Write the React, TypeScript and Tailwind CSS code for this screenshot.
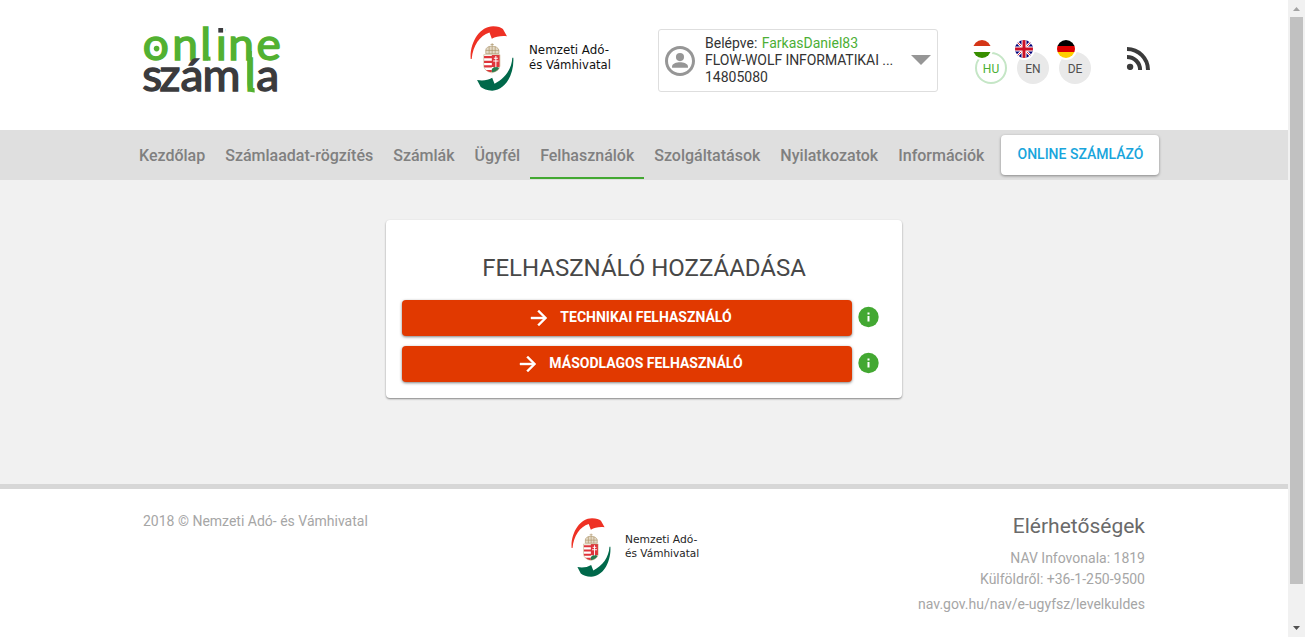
import { type ReactNode } from "react";

function OnlineLogo() {
  return (
    <svg width="144" height="82" viewBox="0 -10 144 82" overflow="visible" className="ml-[141px] mt-[15px] block shrink-0" fontFamily="Lato, sans-serif" fontWeight="400" strokeWidth="1.4">
      <text transform="scale(1.06 1)" y="34.7" fontSize="43.5" fill="#52b131" stroke="#52b131" x="1.7 29.5 56 70.6 82.4 109">online</text>
      <rect x="74" y="-2" width="10" height="11" fill="#fff" />
      <rect x="77.3" y="3" width="4.8" height="4.6" fill="#3b3b3d" />
      <circle cx="15.6" cy="23.6" r="2.8" fill="#52b131" />
      <path d="M64.5 30Q64.5 34 69.5 33.6" fill="none" stroke="#52b131" strokeWidth="4" />
      <text transform="scale(1.06 1)" y="66.3" fontSize="43.5" fill="#3b3b3d" stroke="#3b3b3d" x="1.3 17.5 37.3 58 98 108.7">
        szám<tspan fill="#52b131" stroke="#52b131">l</tspan>a
      </text>
      <path d="M108.6 26V59Q108.6 65.5 113.6 65.2" fill="none" stroke="#52b131" strokeWidth="4.4" />
    </svg>
  );
}

function Emblem({ className, width, height, id }: { className: string; width: number; height: number; id: string }) {
  return (
    <svg width={width} height={height} viewBox="29 32 131 197" preserveAspectRatio="none" className={className}>
      <defs>
        <clipPath id={id}><path d="M70 119H118V153Q117 168 94 174Q71 168 70 153Z" /></clipPath>
      </defs>
      <path fill="#ee3124" d="M31 132C28 82 58 33 98 33C112 33 122 37 127 41L139 63C121 61 106 64 94 71L87 52C58 61 38 92 34 132Z" />
      <path fill="#00684a" d="M158 128C161 178 134 228 95 228C80 228 68 222 61 217L50 196C67 199 82 197 95 189L102 207C132 192 153 164 155 128Z" />
      <g clipPath={`url(#${id})`}>
        <path fill="#fff" d="M70 119H118V174H70Z" />
        <path fill="#df343b" d="M70 123H94V130H70ZM70 137H94V144H70ZM70 151H94V158H70ZM70 165H94V172H70ZM94 119H118V156H94Z" />
        <path fill="#287b50" d="M94 162Q105 150 118 160V174H94Z" />
        <path stroke="#fff" strokeWidth="3" d="M106 123V157M100 130H112M98 138H114" />
      </g>
      <path d="M70 119H118V153Q117 168 94 174Q71 168 70 153Z" fill="none" stroke="#b99a6a" strokeWidth="1.5" />
      <path d="M76 116V105Q77 94 94 93Q112 94 115 105V116ZM76 106H115M86 94V116M95 84V116M104 94V116M90 88H100" fill="#e4dac8" stroke="#ab9266" strokeWidth="2" />
    </svg>
  );
}

function Wordmark({ className, width, height, small }: { className: string; width: number; height: number; small?: boolean }) {
  return (
    <svg width={width} height={height} viewBox="0 0 84 34" preserveAspectRatio="none" className={className} fontFamily="'DejaVu Sans', sans-serif" fontSize="11.8" fill={small ? "#252525" : "#111"}>
      <text x="0" y="12" textLength="80" lengthAdjust="spacingAndGlyphs">Nemzeti Adó-</text>
      <text x="0" y="27" textLength="82" lengthAdjust="spacingAndGlyphs">és Vámhivatal</text>
    </svg>
  );
}

function Flag({ code }: { code: string }) {
  return (
    <svg width="22" height="22" viewBox="0 0 22 22" className="absolute -left-[4px] -top-[14px]">
      <defs><clipPath id={`flag-${code}`}><circle cx="11" cy="11" r="9" /></clipPath></defs>
      <circle cx="11" cy="11" r="11" fill="#fff" />
      <g clipPath={`url(#flag-${code})`}>
        {code === "HU" && <><path fill="#d43516" d="M0 0H22V8H0Z" /><path fill="#388e00" d="M0 14H22V22H0Z" /></>}
        {code === "DE" && <><path fill="#000" d="M0 0H22V8H0Z" /><path fill="#dd0000" d="M0 8H22V14H0Z" /><path fill="#ffce00" d="M0 14H22V22H0Z" /></>}
        {code === "EN" && <>
          <path fill="#00007a" d="M0 0H22V22H0Z" />
          <path stroke="#fff" strokeWidth="2.6" d="M0 0L22 22M22 0L0 22" />
          <path stroke="#cc1026" strokeWidth="0.9" d="M0 0L22 22M22 0L0 22" />
          <path stroke="#fff" strokeWidth="5" d="M11 0V22M0 11H22" />
          <path stroke="#cc1026" strokeWidth="3" d="M11 0V22M0 11H22" />
        </>}
      </g>
    </svg>
  );
}

function Language({ code, active }: { code: string; active?: boolean }) {
  return (
    <button className={`relative flex size-8 items-center justify-center rounded-full text-[12px] ${active ? "text-[#4caf35] shadow-[inset_0_0_0_2px_#c5e6c6]" : "bg-[#e9e9e9] text-[#505050]"}`}>
      <span className="translate-y-px">{code}</span>
      <Flag code={code} />
    </button>
  );
}

function NavItem({ children, active }: { children: ReactNode; active?: boolean }) {
  return (
    <a className={`flex h-[49px] items-center whitespace-nowrap border-b-2 px-[10px] pt-[5px] text-[16px] font-medium ${active ? "border-[#43a832] text-[#808080]" : "border-transparent text-[#808080]"}`}>{children}</a>
  );
}

function ActionRow({ children }: { children: ReactNode }) {
  return (
    <div className="flex items-center gap-[6px]">
      <button className="flex h-9 w-[450px] items-center justify-center rounded-[4px] bg-[#e13900] text-[14px] font-bold text-white shadow-[0_1px_3px_rgba(0,0,0,0.5)]">
        <svg width="24" height="24" viewBox="0 0 24 24" className="ml-[5px] mr-[9px]"><path fill="white" stroke="white" strokeWidth="0.4" d="m12 4-1.41 1.41L16.17 11H4v2h12.17l-5.58 5.59L12 20l8-8z" /></svg>
        <span className="-translate-y-px">{children}</span>
      </button>
      <svg width="22" height="22" viewBox="0 0 22 22" className="-mt-[2px]">
        <circle cx="10.5" cy="11" r="10.2" fill="#43a832" />
        <path fill="white" d="M9.5 6.5H11.5V8.5H9.5ZM9.5 10H11.5V15.5H9.5Z" />
      </svg>
    </div>
  );
}

export default function App() {
  return (
    <div className="flex h-[637px] w-[1305px] overflow-hidden bg-white font-['Roboto',sans-serif]">
      <div className="flex w-[1288px] flex-col">
        <header className="flex h-[130px] shrink-0 items-start">
          <OnlineLogo />
          <Emblem id="shield-top" width={44} height={65} className="ml-[185px] mt-[26px] shrink-0" />
          <Wordmark width={84} height={34} className="ml-[15px] mt-[42px] shrink-0" />
          <div className="ml-[45px] mt-[29px] flex h-[63px] w-[280px] shrink-0 items-center rounded-[3px] border border-[#dedede] pl-[3px] pr-[6px]">
            <svg width="36" height="36" viewBox="0 0 24 24" className="shrink-0" fill="#969696"><path d="M12 2C6.48 2 2 6.48 2 12s4.48 10 10 10 10-4.48 10-10S17.52 2 12 2m0 18c-4.41 0-8-3.59-8-8s3.59-8 8-8 8 3.59 8 8-3.59 8-8 8" /><circle cx="12" cy="9.4" r="2.7" /><path d="M6.7 16.5v-1c0-1.7 3-2.7 5.3-2.7s5.3 1 5.3 2.7v1z" /></svg>
            <div className="ml-[7px] flex-1 whitespace-nowrap text-[14px] leading-[17px] text-[#333]">
              <p>Belépve: <span className="ml-px text-[#4caf35]">FarkasDaniel83</span></p>
              <p className="tracking-[-0.07px]">FLOW-WOLF INFORMATIKAI ...</p>
              <p>14805080</p>
            </div>
            <svg width="20" height="10" viewBox="0 0 20 10" className="-mt-[2px] shrink-0"><path fill="#969696" d="M0 0H20L10 10Z" /></svg>
          </div>
          <div className="ml-[37px] mt-[52px] flex gap-[10px]">
            <Language code="HU" active />
            <Language code="EN" />
            <Language code="DE" />
          </div>
          <svg width="24" height="24" viewBox="0 0 24 24" className="ml-[35px] mt-[46px]" fill="none" stroke="#3b3b3b" strokeWidth="4"><circle cx="4.1" cy="20.9" r="3.2" fill="#3b3b3b" stroke="none" /><path d="M1 10.9A13.1 13.1 0 0 1 14.1 24M1 3A21 21 0 0 1 22 24" /></svg>
        </header>
        <nav className="flex h-[50px] shrink-0 items-start bg-[#dfdfdf] pl-[129px]">
          <NavItem>Kezdőlap</NavItem>
          <NavItem>Számlaadat-rögzítés</NavItem>
          <NavItem>Számlák</NavItem>
          <NavItem>Ügyfél</NavItem>
          <NavItem active>Felhasználók</NavItem>
          <NavItem>Szolgáltatások</NavItem>
          <NavItem>Nyilatkozatok</NavItem>
          <NavItem>Információk</NavItem>
          <button className="ml-[7px] mt-[5px] h-10 w-[158px] whitespace-nowrap rounded-[4px] bg-white pb-[2px] text-[14px] font-medium text-[#18a5dc] shadow-[0_1px_3px_rgba(0,0,0,0.4)]">ONLINE SZÁMLÁZÓ</button>
        </nav>
        <main className="flex h-[304px] shrink-0 items-start justify-center bg-[#f1f1f1] pt-10">
          <section className="h-[178px] w-[516px] rounded-[4px] bg-white px-4 pt-[32px] shadow-[0_1px_2px_rgba(0,0,0,0.45)]">
            <h1 className="mb-[16px] text-center text-[24px] leading-8 text-[#484848]">FELHASZNÁLÓ HOZZÁADÁSA</h1>
            <div className="flex flex-col gap-[10px]">
              <ActionRow>TECHNIKAI FELHASZNÁLÓ</ActionRow>
              <ActionRow>MÁSODLAGOS FELHASZNÁLÓ</ActionRow>
            </div>
          </section>
        </main>
        <footer className="flex flex-1 items-start border-t-[5px] border-[#d7d7d7] bg-white pl-[143px] pr-[143px] text-[14px] text-[#a6a6a6]">
          <p className="mt-[22px] w-[428px] leading-5">2018 © Nemzeti Adó- és Vámhivatal</p>
          <Emblem id="shield-bottom" width={40} height={59} className="mt-[29px] shrink-0" />
          <Wordmark small width={76} height={31} className="ml-[14px] mt-[43px] shrink-0" />
          <div className="ml-auto text-right">
            <h2 className="mt-[23px] text-[21px] leading-7 text-[#6a6a6a]">Elérhetőségek</h2>
            <p className="mt-[8px] leading-[21px]">NAV Infovonala: 1819</p>
            <p className="leading-[21px]">Külföldről: +36-1-250-9500</p>
            <p className="mt-[4px] leading-[21px]">nav.gov.hu/nav/e-ugyfsz/levelkuldes</p>
          </div>
        </footer>
      </div>
      <aside className="flex w-[17px] flex-col items-center bg-[#f1f1f1]">
        <svg width="17" height="17" viewBox="0 0 17 17"><path fill="#a3a3a3" d="M5 11H12L8.5 7Z" /></svg>
        <div className="h-[567px] w-[13px] bg-[#c1c1c1]" />
        <svg width="17" height="17" viewBox="0 0 17 17" className="mt-auto"><path fill="#505050" d="M5 6H12L8.5 10Z" /></svg>
      </aside>
    </div>
  );
}
